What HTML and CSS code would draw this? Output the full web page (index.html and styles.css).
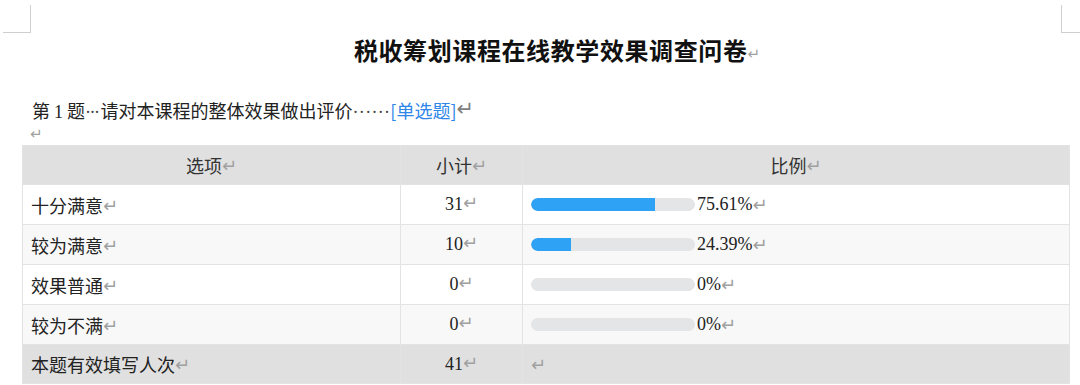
FILE: index.html
```html
<!DOCTYPE html>
<html lang="zh-CN">
<head>
<meta charset="utf-8">
<title>税收筹划课程在线教学效果调查问卷</title>
<link rel="stylesheet" href="styles.css">
</head>
<body>
<div class="page">
  <div class="marks">
    <div class="mark mark-left"></div>
    <div class="mark mark-right"></div>
  </div>
  <h1 class="title">税收筹划课程在线教学效果调查问卷<span class="pm">↵</span></h1>
  <p class="question">第 <span class="num">1</span> 题<span class="dots dots-tight">···</span>请对本课程的整体效果做出评价<span class="dots">······</span><span class="type">[单选题]</span><span class="pm pm-dark">↵</span></p>
  <p class="blank"><span class="pm">↵</span></p>
  <table class="stats">
    <colgroup>
      <col class="c1"><col class="c2"><col class="c3">
    </colgroup>
    <thead>
      <tr class="head">
        <th class="opt-h">选项<span class="pm">↵</span></th>
        <th>小计<span class="pm">↵</span></th>
        <th>比例<span class="pm">↵</span></th>
      </tr>
    </thead>
    <tbody>
      <tr class="row">
        <td class="opt">十分满意<span class="pm">↵</span></td>
        <td class="cnt">31<span class="pm">↵</span></td>
        <td class="ratio"><div class="bar-wrap"><div class="bar"><div class="fill" style="width:75.61%"></div></div><span class="pct">75.61%</span><span class="pm">↵</span></div></td>
      </tr>
      <tr class="row alt">
        <td class="opt">较为满意<span class="pm">↵</span></td>
        <td class="cnt">10<span class="pm">↵</span></td>
        <td class="ratio"><div class="bar-wrap"><div class="bar"><div class="fill" style="width:24.39%"></div></div><span class="pct">24.39%</span><span class="pm">↵</span></div></td>
      </tr>
      <tr class="row">
        <td class="opt">效果普通<span class="pm">↵</span></td>
        <td class="cnt">0<span class="pm">↵</span></td>
        <td class="ratio"><div class="bar-wrap"><div class="bar"></div><span class="pct">0%</span><span class="pm">↵</span></div></td>
      </tr>
      <tr class="row alt">
        <td class="opt">较为不满<span class="pm">↵</span></td>
        <td class="cnt">0<span class="pm">↵</span></td>
        <td class="ratio"><div class="bar-wrap"><div class="bar"></div><span class="pct">0%</span><span class="pm">↵</span></div></td>
      </tr>
      <tr class="foot">
        <td class="opt">本题有效填写人次<span class="pm">↵</span></td>
        <td class="cnt">41<span class="pm">↵</span></td>
        <td class="ratio"><span class="pm">↵</span></td>
      </tr>
    </tbody>
  </table>
</div>
</body>
</html>
```
FILE: styles.css
```css
html, body {
  margin: 0;
  padding: 0;
  background: #ffffff;
}
body {
  font-family: "Noto Sans CJK SC", "Liberation Sans", sans-serif;
  color: #1f1f1f;
}
.page {
  width: 1080px;
  height: 385px;
  overflow: hidden;
}
.marks {
  display: flex;
  justify-content: space-between;
  height: 34px;
}
.mark {
  margin-top: 5px;
  height: 28px;
  box-sizing: border-box;
  border-bottom: 1px solid #cfcfcf;
}
.mark-left {
  margin-left: 3px;
  width: 28px;
  border-right: 1px solid #cfcfcf;
}
.mark-right {
  width: 19px;
  border-left: 1px solid #cfcfcf;
}
.pm {
  font-family: "DejaVu Sans", sans-serif;
  font-size: 18px;
  line-height: 1;
  font-weight: normal;
  color: #a0a0a0;
  margin-left: 0;
  vertical-align: 1px;
  letter-spacing: 0;
}
.pm-dark {
  color: #808080;
  font-size: 21px;
  vertical-align: 2px;
}
.title {
  margin: 0;
  height: 32px;
  line-height: 32px;
  font-size: 24px;
  font-weight: bold;
  color: #111;
  text-align: center;
  padding-left: 34px;
  letter-spacing: 0.6px;
}
.title .pm {
  font-size: 15px;
}
.question {
  margin: 31px 0 0 32px;
  height: 26px;
  line-height: 26px;
  font-size: 18px;
  color: #222;
  letter-spacing: 0;
}
.question .num {
  font-family: "Liberation Serif", serif;
}
.dots {
  font-family: "Liberation Serif", serif;
  color: #444;
  letter-spacing: 0.3px;
}
.dots-tight {
  letter-spacing: -1.5px;
  margin-right: 2px;
}
.question .type {
  color: #2e86e8;
}
.blank {
  margin: 0 0 0 30px;
  height: 20px;
  line-height: 20px;
}
.blank .pm {
  font-size: 15px;
}
.stats {
  margin: 2px 0 0 22px;
  width: 1047px;
  border-collapse: collapse;
  table-layout: fixed;
  font-size: 18px;
}
.c1 { width: 378px; }
.c2 { width: 122px; }
.c3 { width: 547px; }
.stats th, .stats td {
  border: 1px solid #e3e3e3;
  padding: 0;
  vertical-align: middle;
}
.stats th {
  font-weight: normal;
  color: #333;
  text-align: center;
  background: #e0e0e0;
  height: 38px;
}
.row td {
  background: #ffffff;
  height: 39px;
}
.row.alt td {
  background: #f8f8f8;
}
.foot td {
  background: #e0e0e0;
  height: 38px;
}
.opt {
  padding-left: 8px !important;
  text-align: left;
  color: #222;
}
.cnt {
  text-align: center;
  font-family: "Liberation Serif", serif;
  color: #222;
}
.ratio {
  padding-left: 8px !important;
}
.bar-wrap {
  display: flex;
  align-items: center;
}
.bar {
  width: 164px;
  height: 13px;
  border-radius: 7px;
  background: #e4e5e7;
  overflow: hidden;
  display: flex;
}
.fill {
  height: 100%;
  background: #2ea3f5;
  border-radius: 7px 0 0 7px;
}
.pct {
  margin-left: 2px;
  font-family: "Liberation Serif", serif;
  font-size: 18px;
  color: #222;
}
```
